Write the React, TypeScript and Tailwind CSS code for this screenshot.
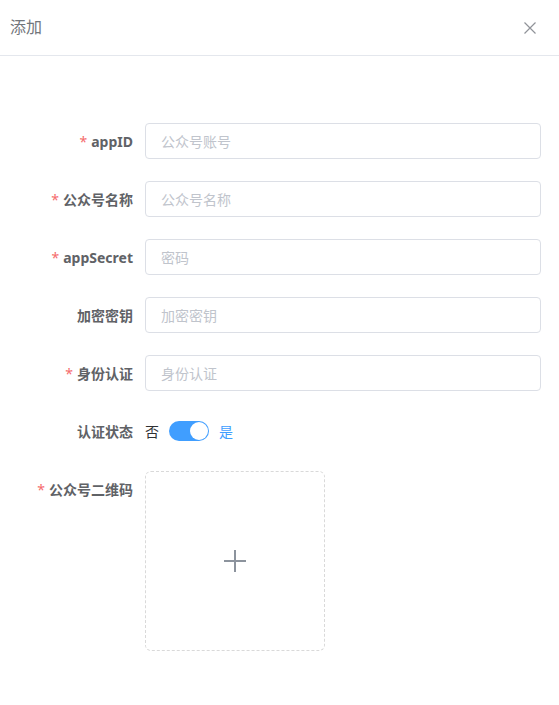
import React from "react";

const font = { fontFamily: '"Noto Sans", "Noto Sans CJK SC", sans-serif' };

function Label({ text, required }: { text: string; required?: boolean }) {
  return (
    <div className="w-[145px] shrink-0 pr-[12px] h-[36px] flex items-center justify-end text-[14px] font-bold text-[#606266]">
      {required && <span className="text-[#f56c6c] mr-[4px] font-normal">*</span>}
      <span>{text}</span>
    </div>
  );
}

function InputRow({ label, placeholder, required }: { label: string; placeholder: string; required?: boolean }) {
  return (
    <div className="flex items-start mb-[22px]">
      <Label text={label} required={required} />
      <input
        placeholder={placeholder}
        className="flex-1 h-[36px] border border-[#dcdfe6] rounded-[4px] px-[15px] text-[14px] text-[#606266] placeholder:text-[#c0c4cc] outline-none"
        style={font}
      />
    </div>
  );
}

export default function App() {
  return (
    <div className="w-[559px] h-[705px] bg-white" style={font}>
      <div className="h-[56px] border-b border-[#e4e7ed] flex items-center justify-between pl-[10px] pr-[22px] pb-[1px]">
        <span className="text-[16px] text-[#72767b]">添加</span>
        <svg width="14" height="14" viewBox="0 0 14 14" className="mt-[1px]">
          <path d="M1.5 1.5 L12.5 12.5 M12.5 1.5 L1.5 12.5" stroke="#909399" strokeWidth="1.2" fill="none" />
        </svg>
      </div>
      <div className="pt-[67px] pr-[18px]">
        <InputRow label="appID" placeholder="公众号账号" required />
        <InputRow label="公众号名称" placeholder="公众号名称" required />
        <InputRow label="appSecret" placeholder="密码" required />
        <InputRow label="加密密钥" placeholder="加密密钥" />
        <InputRow label="身份认证" placeholder="身份认证" required />
        <div className="flex items-start mb-[22px]">
          <Label text="认证状态" />
          <div className="h-[36px] flex items-center text-[14px]">
            <span className="text-[#303133] mr-[10px]">否</span>
            <div className="w-[40px] h-[20px] rounded-full bg-[#409eff] relative">
              <div className="absolute right-[1px] top-[1px] w-[18px] h-[18px] rounded-full bg-white" />
            </div>
            <span className="text-[#409eff] ml-[10px]">是</span>
          </div>
        </div>
        <div className="flex items-start">
          <div className="w-[145px] shrink-0 pr-[12px] h-[36px] flex items-center justify-end text-[14px] font-bold text-[#606266]">
            <span className="text-[#f56c6c] mr-[4px] font-normal">*</span>
            <span>公众号二维码</span>
          </div>
          <div className="w-[180px] h-[180px] border border-dashed border-[#d9d9d9] rounded-[6px] flex items-center justify-center">
            <svg width="24" height="24" viewBox="0 0 24 24">
              <path d="M12 1 V23 M1 12 H23" stroke="#8c939d" strokeWidth="2" fill="none" />
            </svg>
          </div>
        </div>
      </div>
    </div>
  );
}
